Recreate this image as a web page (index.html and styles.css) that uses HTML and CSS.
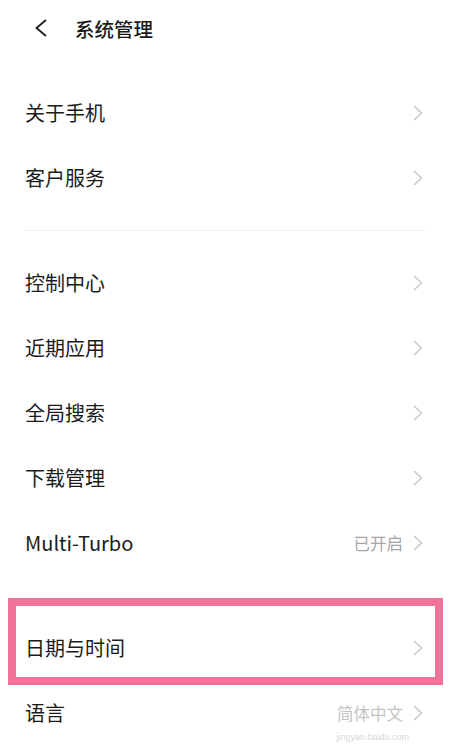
FILE: index.html
```html
<!DOCTYPE html>
<html>
	<head>
		<title>系统管理</title>
		<meta name="viewport" content="width=device-width, initial-scale=1" />
		<link rel="stylesheet" href="styles.css">
	</head>
	<body>
		<header class="topbar">
			<svg class="back" width="14" height="18" viewBox="0 0 14 18"><path d="M12 1 L2.5 9 L12 17" fill="none" stroke="#1b1b1b" stroke-width="1.8"/></svg>
			<h1>系统管理</h1>
		</header>
		<main>
			<section class="group">
				<div class="row"><span class="label">关于手机</span><svg class="chev" viewBox="0 0 10 16"><path d="M1 1 L8.5 8 L1 15"/></svg></div>
				<div class="row"><span class="label">客户服务</span><svg class="chev" viewBox="0 0 10 16"><path d="M1 1 L8.5 8 L1 15"/></svg></div>
			</section>
			<div class="gap lined"></div>
			<section class="group">
				<div class="row"><span class="label">控制中心</span><svg class="chev" viewBox="0 0 10 16"><path d="M1 1 L8.5 8 L1 15"/></svg></div>
				<div class="row"><span class="label">近期应用</span><svg class="chev" viewBox="0 0 10 16"><path d="M1 1 L8.5 8 L1 15"/></svg></div>
				<div class="row"><span class="label">全局搜索</span><svg class="chev" viewBox="0 0 10 16"><path d="M1 1 L8.5 8 L1 15"/></svg></div>
				<div class="row"><span class="label">下载管理</span><svg class="chev" viewBox="0 0 10 16"><path d="M1 1 L8.5 8 L1 15"/></svg></div>
				<div class="row"><span class="label">Multi-Turbo</span><span class="value">已开启</span><svg class="chev" viewBox="0 0 10 16"><path d="M1 1 L8.5 8 L1 15"/></svg></div>
			</section>
			<div class="gap"></div>
			<section class="group">
				<div class="row marked"><span class="label">日期与时间</span><svg class="chev" viewBox="0 0 10 16"><path d="M1 1 L8.5 8 L1 15"/></svg><div class="mark"></div></div>
				<div class="row"><span class="label">语言</span><span class="value faded">简体中文</span><svg class="chev" viewBox="0 0 10 16"><path d="M1 1 L8.5 8 L1 15"/></svg><small class="wm">jingyan.baidu.com</small></div>
			</section>
		</main>
	</body>
</html>
```

FILE: styles.css
```css
body {
	margin: 0;
	background: #fff;
	color: #1b1b1b;
	font-family: "Noto Sans CJK SC", "Noto Sans", sans-serif;
	overflow: hidden;
}
.topbar {
	display: flex;
	align-items: center;
	height: 56px;
	padding-left: 34px;
}
.topbar .back { margin-right: 27px; }
.topbar h1 {
	margin: 0;
	font-size: 19.5px;
	font-weight: 500;
}
main { padding-top: 24px; }
.row {
	position: relative;
	display: flex;
	align-items: center;
	height: 65px;
	padding: 0 28px 0 25px;
}
.label {
	flex: 1;
	font-size: 20px;
}
.value {
	font-size: 16.5px;
	color: #a5a5a5;
	margin-right: 10px;
}
.value.faded { color: #c4c4c4; }
.chev {
	width: 10px;
	height: 16px;
	fill: none;
	stroke: #c4c4c4;
	stroke-width: 1.3;
}
.gap { height: 40px; }
.gap.lined {
	display: flex;
	align-items: center;
	padding: 0 25px;
}
.gap.lined::after {
	content: "";
	flex: 1;
	height: 1px;
	background: #f2f2f2;
}
.mark {
	position: absolute;
	left: 8px;
	right: 8px;
	top: -17px;
	bottom: -5px;
	border: 8px solid #f27398;
	pointer-events: none;
}
.wm {
	position: absolute;
	right: 42px;
	bottom: 3px;
	font-size: 9px;
	color: #d8d8d8;
	font-family: "Liberation Sans", sans-serif;
}
```
